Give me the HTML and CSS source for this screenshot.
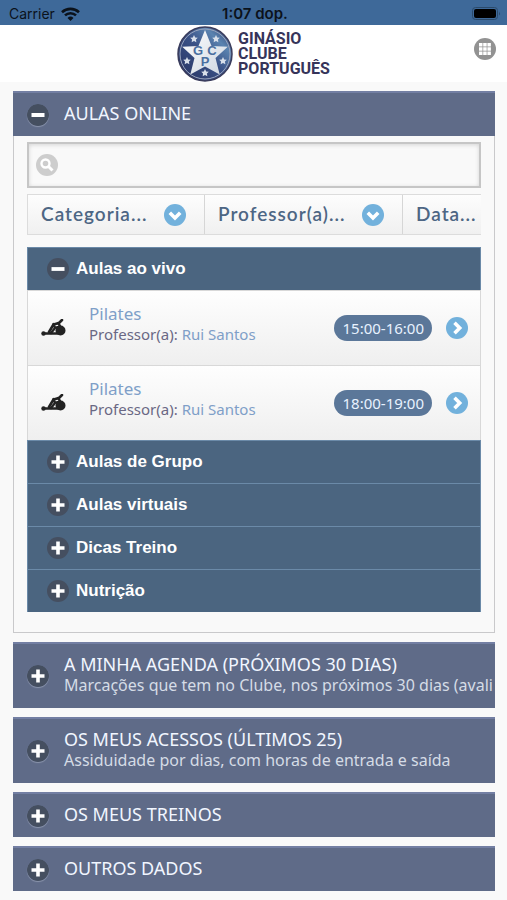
FILE: index.html
```html
<!DOCTYPE html>
<html lang="pt">
<head>
    <meta charset="UTF-8">
    <meta name="viewport" content="width=device-width, initial-scale=1.0">
    <title>Ginásio Clube Português</title>
    <link rel="stylesheet" href="styles.css">
</head>
<body>
    <!-- Shared icons -->
    <svg class="defs" aria-hidden="true">
        <symbol id="plus" viewBox="0 0 22 22">
            <circle cx="11" cy="11" r="11" fill="#454f60"/>
            <path d="M11 4.500v13M4.500 11h13" stroke="#fff" stroke-width="3.600"/>
        </symbol>
        <symbol id="minus" viewBox="0 0 22 22">
            <circle cx="11" cy="11" r="11" fill="#454f60"/>
            <path d="M4.500 11h13" stroke="#fff" stroke-width="3.800"/>
        </symbol>
        <symbol id="down" viewBox="0 0 22 22">
            <circle cx="11" cy="11" r="11" fill="#72b1dc"/>
            <path d="M5.800 8.800l5.200 5.200 5.200-5.200" fill="none" stroke="#fff" stroke-width="3.600"/>
        </symbol>
        <symbol id="right" viewBox="0 0 22 22">
            <circle cx="11" cy="11" r="11" fill="#72b1dc"/>
            <path d="M8.500 5.800l5.200 5.200-5.200 5.200" fill="none" stroke="#fff" stroke-width="3.600"/>
        </symbol>
        <symbol id="star" viewBox="-10 -10 20 20">
            <path d="M0-10L3-4 9.500-3.100 4.800 1.500 5.900 8.100 0 5-5.900 8.100-4.800 1.500-9.500-3.100-3-4z"/>
        </symbol>
        <symbol id="pilates" viewBox="0 0 26 18">
            <g fill="none" stroke="#222" stroke-linecap="round" stroke-linejoin="round">
                <path d="M3 14.500h14" stroke-width="2.600"/>
                <path d="M8 13l4.500-7.500L18 4l3-3" stroke-width="2.600"/>
                <path d="M12.500 5l1.500 4-4 5M14 9l5-2-2-3" stroke-width="2.400"/>
            </g>
            <circle cx="2.500" cy="14.500" r="2.200" fill="#222"/>
            <circle cx="19.500" cy="11.500" r="5" fill="#222"/>
        </symbol>
    </svg>

    <div class="status-bar">
        <div class="carrier">
            Carrier
            <svg width="19" height="14" viewBox="0 0 19 14" aria-hidden="true">
                <path d="M1 5.200a12.500 12.500 0 0 1 17 0M4 8.400a8 8 0 0 1 11 0" fill="none" stroke="#0b121b" stroke-width="2.600"/>
                <path d="M9.500 14l-3-3a4.300 4.300 0 0 1 6 0z" fill="#0b121b"/>
            </svg>
        </div>
        <div class="clock">1:07 dop.</div>
        <div class="battery">
            <svg width="29" height="13" viewBox="0 0 29 13" aria-hidden="true">
                <rect x=".5" y=".5" width="25" height="12" rx="3" fill="none" stroke="#2b4a6b"/>
                <rect x="2" y="2" width="22" height="9" rx="2" fill="#000"/>
                <path d="M27 4.500q1.800 2 0 4z" fill="#2b4a6b"/>
            </svg>
        </div>
    </div>

    <header class="header">
        <a href="#" class="logo">
            <svg width="56" height="56" viewBox="0 0 56 56" aria-hidden="true">
                <defs>
                    <linearGradient id="blue" x1="0" y1="1" x2="1" y2="0">
                        <stop offset="0" stop-color="#25305f"/>
                        <stop offset=".5" stop-color="#3a5186"/>
                        <stop offset=".75" stop-color="#5a83b0"/>
                        <stop offset="1" stop-color="#2d3766"/>
                    </linearGradient>
                    <linearGradient id="silver" x1="0" y1="0" x2="1" y2="1">
                        <stop offset="0" stop-color="#fff"/>
                        <stop offset="1" stop-color="#cdd5e0"/>
                    </linearGradient>
                </defs>
                <circle cx="28" cy="28" r="27" fill="url(#blue)" stroke="#3a3c5c" stroke-width="1.500"/>
                <circle cx="28" cy="28" r="25" fill="none" stroke="#9ba5bd"/>
                <path d="M28 4l6.500 16 16.300.8L38.500 32l4.200 16.500L28 40.500l-14.700 8L17.500 32 5.200 20.800l16.300-.8z" fill="url(#silver)"/>
                <g fill="#d8dfea">
                    <use href="#star" x="13" y="9" width="8" height="8"/>
                    <use href="#star" x="35" y="9" width="8" height="8"/>
                    <use href="#star" x="6" y="31" width="8" height="8"/>
                    <use href="#star" x="42" y="31" width="8" height="8"/>
                    <use href="#star" x="24" y="43" width="8" height="8"/>
                </g>
                <g class="monogram">
                    <text x="21" y="29">G</text>
                    <text x="35" y="29">C</text>
                    <text x="28" y="40">P</text>
                </g>
            </svg>
            <span class="logo-text">GINÁSIO<br>CLUBE<br>PORTUGUÊS</span>
        </a>
        <button type="button" class="menu" aria-label="Menu">
            <svg width="22" height="22" viewBox="0 0 22 22" aria-hidden="true">
                <circle cx="11" cy="11" r="11" fill="#929292"/>
                <path d="M5 5h3.500v3.500H5zm4.200 0h3.500v3.500H9.200zm4.200 0h3.500v3.500h-3.500zM5 9.200h3.500v3.500H5zm4.200 0h3.500v3.500H9.200zm4.200 0h3.500v3.500h-3.500zM5 13.400h3.500v3.500H5zm4.200 0h3.500v3.500H9.200zm4.200 0h3.500v3.500h-3.500z" fill="#fff"/>
            </svg>
        </button>
    </header>

    <main class="content">
        <section class="panel">
            <button type="button" class="panel-head" aria-expanded="true">
                <svg class="icon"><use href="#minus"/></svg>
                <span class="panel-title">AULAS ONLINE</span>
            </button>
            <div class="panel-body">
                <div class="search">
                    <input type="search" id="search" aria-label="Pesquisar">
                    <svg class="search-icon" viewBox="0 0 22 22" aria-hidden="true">
                        <circle cx="11" cy="11" r="11" fill="#cdcdcd"/>
                        <circle cx="9.500" cy="9.500" r="4" fill="none" stroke="#fff" stroke-width="2.400"/>
                        <path d="M12.500 12.500l4 4" stroke="#fff" stroke-width="3"/>
                    </svg>
                </div>

                <div class="filters">
                    <div class="filter">
                        <select aria-label="Categoria"><option>Categoria...</option></select>
                        <svg class="filter-icon"><use href="#down"/></svg>
                    </div>
                    <div class="filter">
                        <select aria-label="Professor(a)"><option>Professor(a)...</option></select>
                        <svg class="filter-icon"><use href="#down"/></svg>
                    </div>
                    <div class="filter">
                        <select aria-label="Data"><option>Data...</option></select>
                        <svg class="filter-icon"><use href="#down"/></svg>
                    </div>
                </div>

                <div class="groups">
                    <button type="button" class="group-head" aria-expanded="true">
                        <svg class="icon"><use href="#minus"/></svg>Aulas ao vivo
                    </button>
                    <a href="#" class="lesson">
                        <span class="thumb"><svg width="26" height="18"><use href="#pilates"/></svg></span>
                        <span class="lesson-info">
                            <span class="lesson-name">Pilates</span>
                            <span class="teacher">Professor(a): <span class="teacher-name">Rui Santos</span></span>
                        </span>
                        <span class="time">15:00-16:00</span>
                        <svg class="icon"><use href="#right"/></svg>
                    </a>
                    <a href="#" class="lesson">
                        <span class="thumb"><svg width="26" height="18"><use href="#pilates"/></svg></span>
                        <span class="lesson-info">
                            <span class="lesson-name">Pilates</span>
                            <span class="teacher">Professor(a): <span class="teacher-name">Rui Santos</span></span>
                        </span>
                        <span class="time">18:00-19:00</span>
                        <svg class="icon"><use href="#right"/></svg>
                    </a>
                    <button type="button" class="group-head" aria-expanded="false">
                        <svg class="icon"><use href="#plus"/></svg>Aulas de Grupo
                    </button>
                    <button type="button" class="group-head" aria-expanded="false">
                        <svg class="icon"><use href="#plus"/></svg>Aulas virtuais
                    </button>
                    <button type="button" class="group-head" aria-expanded="false">
                        <svg class="icon"><use href="#plus"/></svg>Dicas Treino
                    </button>
                    <button type="button" class="group-head" aria-expanded="false">
                        <svg class="icon"><use href="#plus"/></svg>Nutrição
                    </button>
                </div>
            </div>
        </section>

        <section class="panel">
            <button type="button" class="panel-head" aria-expanded="false">
                <svg class="icon"><use href="#plus"/></svg>
                <span class="panel-title">A MINHA AGENDA (PRÓXIMOS 30 DIAS)
                    <small>Marcações que tem no Clube, nos próximos 30 dias (avali</small>
                </span>
            </button>
        </section>

        <section class="panel">
            <button type="button" class="panel-head" aria-expanded="false">
                <svg class="icon"><use href="#plus"/></svg>
                <span class="panel-title">OS MEUS ACESSOS (ÚLTIMOS 25)
                    <small>Assiduidade por dias, com horas de entrada e saída</small>
                </span>
            </button>
        </section>

        <section class="panel">
            <button type="button" class="panel-head" aria-expanded="false">
                <svg class="icon"><use href="#plus"/></svg>
                <span class="panel-title">OS MEUS TREINOS</span>
            </button>
        </section>

        <section class="panel">
            <button type="button" class="panel-head" aria-expanded="false">
                <svg class="icon"><use href="#plus"/></svg>
                <span class="panel-title">OUTROS DADOS</span>
            </button>
        </section>
    </main>
</body>
</html>
```
FILE: styles.css
```css
* {
    box-sizing: border-box;
}
body {
    margin: 0;
    background: #f9f9f9;
    font-family: "Noto Sans", sans-serif;
}
button {
    margin: 0;
    border: none;
    font-family: inherit;
    text-align: left;
    cursor: pointer;
}
a {
    text-decoration: none;
}
svg {
    flex: none;
}
.defs {
    display: none;
}
.icon {
    width: 22px;
    height: 22px;
}

/* Status bar */
.status-bar {
    display: grid;
    grid-template-columns: 1fr auto 1fr;
    align-items: center;
    height: 25px;
    padding: 2px 6px 0 9px;
    background: #3e6999;
    color: #0b121b;
    font-family: Inter, sans-serif;
    font-size: 14px;
}
.carrier {
    display: flex;
    align-items: center;
    gap: 6px;
}
.clock {
    font-size: 15px;
    font-weight: 600;
}
.battery {
    display: flex;
    justify-content: flex-end;
}

/* Header */
.header {
    display: grid;
    grid-template-columns: 1fr auto 1fr;
    align-items: center;
    height: 57px;
    padding: 0 11px;
    background: #fff;
}
.logo {
    grid-column: 2;
    display: flex;
    align-items: center;
    gap: 5px;
}
.logo-text {
    color: #36345a;
    font-family: Roboto, sans-serif;
    font-size: 16px;
    font-weight: bold;
    line-height: 15px;
}
.monogram {
    fill: #4a6fa0;
    font-family: "Liberation Sans", sans-serif;
    font-size: 13px;
    font-weight: bold;
    text-anchor: middle;
}
.menu {
    display: flex;
    justify-self: end;
    align-self: start;
    margin-top: 13px;
    padding: 0;
    background: none;
}

/* Collapsible panels */
.content {
    display: flex;
    flex-direction: column;
    gap: 9px;
    padding: 9px 12px 9px 13px;
}
.panel-head {
    display: flex;
    align-items: center;
    gap: 15px;
    width: 100%;
    padding: 0 0 0 14px;
    border-top: 2px solid #737fa3;
    background: #5f6b88;
    color: #f1f6ff;
    font-size: 18px;
    line-height: 22px;
    white-space: nowrap;
    overflow: hidden;
}
.panel-head .icon {
    border-radius: 50%;
    box-shadow: 0 1px 1px #8b95ac;
}
.panel-title {
    padding: 9px 0 12px;
}
.panel-title small {
    display: block;
    color: #d5dce6;
    font-size: 16px;
    line-height: 21px;
}
.panel-body {
    padding: 6px 13px 20px;
    border: 1px solid #c9c9cb;
    border-top: none;
}

/* Search */
.search {
    position: relative;
}
.search input {
    display: block;
    width: 100%;
    height: 46px;
    padding: 0 12px 0 40px;
    border: 2px solid #c6c6c6;
    border-radius: 0;
    background: #f9f9f9;
    box-shadow: inset 0 1px 4px rgba(0, 0, 0, 0.15);
    font-family: inherit;
    font-size: 17px;
    appearance: none;
}
.search-icon {
    position: absolute;
    top: 12px;
    left: 9px;
    width: 22px;
    height: 22px;
    pointer-events: none;
}

/* Filters */
.filters {
    display: flex;
    margin-top: 6px;
    border: 1px solid #dcdcdc;
    border-right: none;
    background: linear-gradient(#fdfdfd, #f0f0f0);
    overflow: hidden;
}
.filter {
    position: relative;
    flex: none;
}
.filter + .filter {
    border-left: 1px solid #d6d6d6;
}
.filter select {
    display: block;
    height: 39px;
    padding: 0 56px 2px 13px;
    border: none;
    border-radius: 0;
    background: none;
    color: #4d6684;
    font-family: Lato, sans-serif;
    font-size: 19px;
    font-weight: 600;
    letter-spacing: 1px;
    appearance: none;
}
.filter-icon {
    position: absolute;
    top: 9px;
    right: 18px;
    width: 22px;
    height: 22px;
    pointer-events: none;
}

/* Lesson groups */
.groups {
    margin-top: 12px;
}
.group-head {
    display: flex;
    align-items: center;
    gap: 7px;
    width: 100%;
    height: 43px;
    padding: 0 19px;
    border: 1px solid #6b8aa8;
    border-bottom: none;
    background: #4b6580;
    color: #fff;
    font-family: "Liberation Sans", Arial, sans-serif;
    font-size: 17px;
    font-weight: bold;
}
.lesson {
    display: flex;
    align-items: center;
    height: 75px;
    padding: 0 12px 0 13px;
    border: 1px solid #d8d8d8;
    border-bottom: none;
    background: linear-gradient(#fefefe, #efefef);
}
.thumb {
    display: flex;
    width: 48px;
}
.lesson-info {
    display: flex;
    flex-direction: column;
    flex: 1;
    padding-bottom: 8px;
    font-size: 15px;
    line-height: 20px;
}
.lesson-name {
    color: #7f9fc8;
    font-size: 17px;
}
.teacher {
    color: #6a6884;
}
.teacher-name {
    color: #7f9fc8;
}
.time {
    margin-right: 14px;
    padding: 3px 8px;
    border-radius: 13px;
    background: #5b7799;
    color: #e8f2ff;
    font-size: 15px;
    line-height: 20px;
}
```
